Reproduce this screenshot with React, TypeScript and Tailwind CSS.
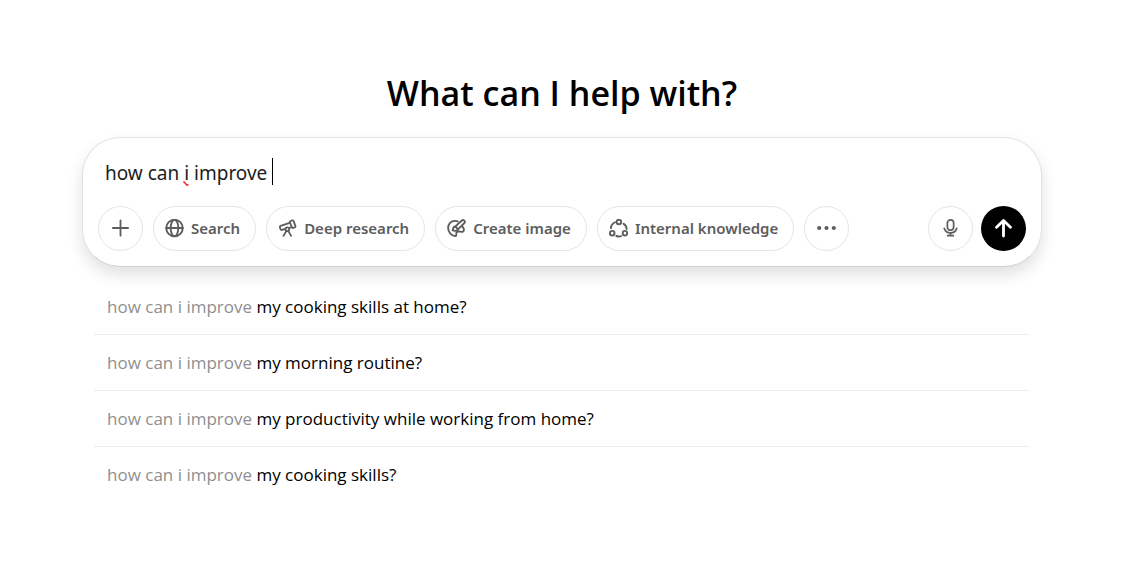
import { useState, type ReactNode } from 'react';

const PREFIX = 'how can i improve';

const suggestions = [
  'my cooking skills at home?',
  'my morning routine?',
  'my productivity while working from home?',
  'my cooking skills?',
];

function Icon({ children, strokeWidth = 2 }: { children: ReactNode; strokeWidth?: number }) {
  return (
    <svg
      viewBox="0 0 20 20"
      className="size-[19px] shrink-0"
      fill="none"
      stroke="currentColor"
      strokeWidth={strokeWidth}
      strokeLinecap="round"
      strokeLinejoin="round"
      aria-hidden="true"
    >
      {children}
    </svg>
  );
}

const GlobeIcon = () => (
  <Icon>
    <circle cx="10" cy="9.5" r="8.7" />
    <ellipse cx="10" cy="9.5" rx="4" ry="8.7" />
    <path d="M1.3 9.5h17.4" />
  </Icon>
);

const TelescopeIcon = () => (
  <Icon strokeWidth={1.9}>
    <path d="M13.2 2.1 14.9 1.5a1.2 1.2 0 0 1 1.5.7l1.9 5.1a1.2 1.2 0 0 1-.7 1.5l-1.5.6a1.2 1.2 0 0 1-1.5-.7L12.5 3.6a1.2 1.2 0 0 1 .7-1.5Z" />
    <path d="M12.3 4 2.7 7.3a1.2 1.2 0 0 0-.7 1.5l.7 2a1.2 1.2 0 0 0 1.5.7l3.800-1.200M12 9.300l2.200-.7" />
    <circle cx="9.8" cy="10.8" r="2" />
    <path d="m8.700 12.800-2.900 5M10.900 12.800l2.900 5" />
  </Icon>
);

const BrushIcon = () => (
  <Icon>
    <path d="M11.200 2.600A7.500 7.500 0 0 0 8.200 2C4.200 2 1.200 5.200 1.200 9.200c0 4.700 3.700 8.800 7.700 8.800" />
    <path d="M18.200 1.700c-.9-.8-2-.6-2.800.1L8.800 7.800l2.700 3.100 6.600-6.400c.8-.8.9-1.900.1-2.800Z" />
    <path d="M9 8C6.600 7.600 6.600 9.700 5.900 12c2.500.7 5.500.8 5.700-1.300" />
    <path d="M16 7.900c1.900 1.700 2.600 4.600.8 5.400-1.300.6-2.600-.1-4-.2-1.900-.1-3.200.8-3 2.300.1.900.3 2.300-.9 2.600" />
  </Icon>
);

const KnowledgeIcon = () => (
  <Icon>
    <circle cx="10.4" cy="3.2" r="2.4" />
    <circle cx="3.4" cy="14.9" r="2.4" />
    <circle cx="16.8" cy="14.9" r="2.4" />
    <path d="M6.300 3.400C3.700 4.700 2.100 7 2 9.600M15.200 4.900c2 1.300 3.200 3.200 3.400 5.600M7.700 17.900c1.600.6 3.400.6 5 .1" />
  </Icon>
);

const tools = [
  { label: 'Search', icon: <GlobeIcon /> },
  { label: 'Deep research', icon: <TelescopeIcon /> },
  { label: 'Create image', icon: <BrushIcon /> },
  { label: 'Internal knowledge', icon: <KnowledgeIcon /> },
];

const round =
  'flex size-[45px] shrink-0 items-center justify-center rounded-full border border-[#e5e5e5] text-[#5d5d5d]';

export default function App() {
  const [value, setValue] = useState(`${PREFIX} `);

  return (
    <main className="min-h-screen bg-white pr-1.5 pt-[68px] font-['Noto_Sans','Open_Sans',sans-serif]">
      <div className="mx-auto max-w-[960px]">
        <h1 className="text-center font-['Open_Sans','Noto_Sans',sans-serif] text-[34px] leading-[50px] font-semibold text-black">
          What can I help with?
        </h1>

        {/* Prompt box */}
        <form
          onSubmit={(e) => e.preventDefault()}
          className="mt-[19px] rounded-[38px] border border-[#e2e2e2] border-b-[#cfcfcf] bg-white px-[15px] pt-5 pb-[15px] shadow-[0_8px_16px_rgba(0,0,0,0.12)]"
        >
          <div className="flex h-[30px] items-center pl-[7px]">
            <div className="relative flex">
              <input
                aria-label="Message"
                value={value}
                onChange={(e) => setValue(e.target.value)}
                spellCheck={false}
                className="[field-sizing:content] bg-transparent text-[19px] leading-[30px] whitespace-pre text-[#1c1c1c] caret-transparent outline-none"
              />
              {/* Spelling mark */}
              <svg viewBox="0 0 6 5" className="absolute top-[23px] left-[78px] h-[5px] w-1.5" fill="none" aria-hidden="true">
                <path d="M.5.5 2.5 2.5 4 4.2 5.5 3.5" stroke="#f0303c" strokeWidth="1.6" />
              </svg>
            </div>
            <span className="mb-[3px] h-[27px] w-px bg-black" />
          </div>

          <div className="mt-[18px] flex items-center gap-2.5">
            <button type="button" aria-label="Add" className={round}>
              <Icon strokeWidth={1.9}>
                <path d="M10 1.500v16M2 9.500h16" />
              </Icon>
            </button>
            {tools.map((tool) => (
              <button
                key={tool.label}
                type="button"
                className="flex h-[45px] items-center gap-[7px] rounded-full border border-[#e5e5e5] pr-[15px] pl-[11px] text-[15px] font-semibold whitespace-nowrap text-[#5d5d5d]"
              >
                {tool.icon}
                {tool.label}
              </button>
            ))}
            <button type="button" aria-label="More" className={round}>
              <svg viewBox="0 0 20 20" className="size-[19px]" fill="currentColor" aria-hidden="true">
                <circle cx="2.3" cy="9.5" r="2.2" />
                <circle cx="10" cy="9.5" r="2.2" />
                <circle cx="17.7" cy="9.5" r="2.2" />
              </svg>
            </button>
            <div className="ml-auto flex gap-2">
              <button type="button" aria-label="Dictate" className={round}>
                <Icon strokeWidth={1.8}>
                  <rect x="6.7" y="1" width="6.6" height="10.8" rx="3.3" />
                  <path d="M3.400 9.800c.9 3 3.500 4.900 6.600 4.900s5.700-1.900 6.600-4.900M10 14.700v2.800M7 17.500h6" />
                </Icon>
              </button>
              <button
                type="submit"
                aria-label="Send"
                className="flex size-[45px] items-center justify-center rounded-full bg-black text-white"
              >
                <Icon strokeWidth={3}>
                  <path d="M10 17.900V1.800M2.700 8.600 10 1.600l7.300 7" />
                </Icon>
              </button>
            </div>
          </div>
        </form>

        {/* Suggestions */}
        <ul className="mt-3 pr-[13px] pl-3">
          {suggestions.map((text) => (
            <li key={text} className="border-b border-[#ececec] last:border-b-0">
              <button
                type="button"
                onClick={() => setValue(`${PREFIX} ${text}`)}
                className="block w-full px-[13px] py-[14px] text-left font-['Open_Sans','Noto_Sans',sans-serif] text-[17px] leading-[27px] text-black"
              >
                <span className="text-[#8f8f8f]">{PREFIX}</span> {text}
              </button>
            </li>
          ))}
        </ul>
      </div>
    </main>
  );
}
